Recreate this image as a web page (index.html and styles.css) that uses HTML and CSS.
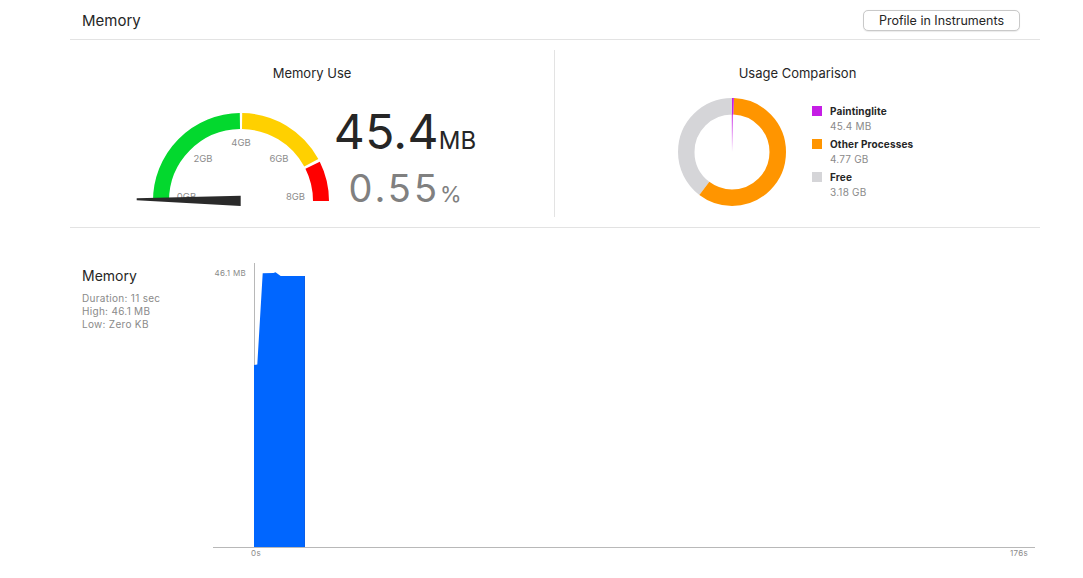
FILE: index.html
```html
<!DOCTYPE html>
<html lang="en">
<head>
<meta charset="utf-8">
<title>Memory</title>
<link rel="stylesheet" href="styles.css">
</head>
<body>
<div class="page">
  <header class="header">
    <div class="header-title">Memory</div>
    <button class="btn">Profile in Instruments</button>
  </header>

  <section class="top">
    <div class="panel panel-left">
      <div class="panel-title">Memory Use</div>
      <div class="gauge-row">
        <svg class="gauge" width="210" height="102" viewBox="0 0 210 102">
          <path d="M31 93 A80 80 0 0 1 109.9 13" fill="none" stroke="#03d82e" stroke-width="16"/>
          <path d="M112.1 13 A80 80 0 0 1 181.3 54.8" fill="none" stroke="#ffd000" stroke-width="16"/>
          <path d="M182.6 57.3 A80 80 0 0 1 191 93" fill="none" stroke="#ff0000" stroke-width="16"/>
          <g class="gauge-labels">
            <text x="56.5" y="91.5">0GB</text>
            <text x="73" y="54">2GB</text>
            <text x="111" y="38">4GB</text>
            <text x="149" y="54">6GB</text>
            <text x="165.5" y="91.5">8GB</text>
          </g>
          <polygon points="6.7,90.3 110.7,87.7 110.7,98 6.7,92.3" fill="#2a2a2a"/>
        </svg>
        <div class="readout">
          <div class="readout-main">45.4<span class="unit-main">MB</span></div>
          <div class="readout-pct">0.55<span class="unit-pct">%</span></div>
        </div>
      </div>
    </div>
    <div class="divider"></div>
    <div class="panel panel-right">
      <div class="panel-title">Usage Comparison</div>
      <div class="donut-row">
        <svg class="donut" width="112" height="112" viewBox="0 0 112 112">
          <defs>
            <linearGradient id="pl" x1="0" y1="0" x2="0" y2="1">
              <stop offset="0" stop-color="#c51de5" stop-opacity="1"/>
              <stop offset="1" stop-color="#c51de5" stop-opacity="0"/>
            </linearGradient>
          </defs>
          <g transform="rotate(-90 56 56)">
            <circle cx="56" cy="56" r="45.75" fill="none" stroke="#d5d5d8" stroke-width="16.5" stroke-dasharray="114.3 300" stroke-dashoffset="-173.16"/>
            <circle cx="56" cy="56" r="45.75" fill="none" stroke="#ff9500" stroke-width="16.5" stroke-dasharray="171.5 300" stroke-dashoffset="-1.66"/>
            <circle cx="56" cy="56" r="45.75" fill="none" stroke="#c51de5" stroke-width="16.5" stroke-dasharray="1.66 300"/>
          </g>
          <rect x="55.8" y="18" width="1" height="38" fill="url(#pl)"/>
        </svg>
        <div class="legend">
          <div class="legend-item">
            <span class="swatch swatch-purple"></span>
            <div class="legend-text">
              <div class="legend-label">Paintinglite</div>
              <div class="legend-value">45.4 MB</div>
            </div>
          </div>
          <div class="legend-item">
            <span class="swatch swatch-orange"></span>
            <div class="legend-text">
              <div class="legend-label">Other Processes</div>
              <div class="legend-value">4.77 GB</div>
            </div>
          </div>
          <div class="legend-item">
            <span class="swatch swatch-gray"></span>
            <div class="legend-text">
              <div class="legend-label">Free</div>
              <div class="legend-value">3.18 GB</div>
            </div>
          </div>
        </div>
      </div>
    </div>
  </section>

  <section class="bottom">
    <div class="side">
      <div class="side-title">Memory</div>
      <div class="side-details">
        <div>Duration: 11 sec</div>
        <div>High: 46.1 MB</div>
        <div>Low: Zero KB</div>
      </div>
    </div>
    <svg class="chart" width="822" height="300" viewBox="0 0 822 300">
      <text class="chart-label" x="33" y="18" text-anchor="end">46.1 MB</text>
      <line x1="41.5" y1="5" x2="41.5" y2="289" stroke="#b8b8b8" stroke-width="1"/>
      <polygon points="41,107 44.3,106.5 49.7,15.3 60.5,15 62.5,14.2 67.7,18 92,18 92,289 41,289" fill="#0066ff"/>
      <line x1="91.5" y1="18" x2="91.5" y2="289" stroke="#0a5ee8" stroke-width="1"/>
      <line x1="0" y1="289.5" x2="822" y2="289.5" stroke="#b8b8b8" stroke-width="1"/>
      <text class="chart-label" x="43" y="298" text-anchor="middle">0s</text>
      <text class="chart-label" x="815" y="298" text-anchor="end">176s</text>
    </svg>
  </section>
</div>
</body>
</html>
```

FILE: styles.css
```css
* { box-sizing: border-box; }

html, body {
  margin: 0;
  padding: 0;
  background: #ffffff;
}

body {
  font-family: "Inter", "Liberation Sans", sans-serif;
  color: #262626;
}

.page {
  margin-left: 70px;
  width: 970px;
}

.header {
  height: 40px;
  display: flex;
  align-items: center;
  justify-content: space-between;
  padding: 0 20px 0 12px;
  border-bottom: 1px solid #e3e3e3;
}

.header-title {
  font-size: 15px;
  line-height: 18px;
  padding-top: 2px;
  color: #262626;
}

.btn {
  width: 157px;
  height: 21px;
  padding: 0;
  margin-top: 2px;
  font-family: inherit;
  font-size: 12.5px;
  color: #262626;
  background: #ffffff;
  border: 1px solid #c9c9c9;
  border-radius: 5px;
  box-shadow: 0 0.5px 1px rgba(0,0,0,0.08);
}

.top {
  display: flex;
  height: 188px;
  border-bottom: 1px solid #e3e3e3;
}

.panel {
  padding-top: 25px;
  display: flex;
  flex-direction: column;
}

.panel-left { width: 484px; }
.panel-right { width: 485px; }

.divider {
  width: 1px;
  background: #e3e3e3;
  margin: 10px 0 10px;
}

.panel-title {
  text-align: center;
  font-size: 13px;
  line-height: 16px;
  color: #262626;
}

.gauge-row {
  display: flex;
  padding-left: 60px;
  margin-top: 27px;
}

.gauge { display: block; }

.gauge-labels text {
  font-family: "Inter", "Liberation Sans", sans-serif;
  font-size: 9.5px;
  fill: #8c8c8c;
  text-anchor: middle;
}

.readout {
  width: 130px;
  display: flex;
  flex-direction: column;
  align-items: center;
}

.readout-main {
  font-size: 48px;
  line-height: 48px;
  color: #262626;
  letter-spacing: 0.3px;
  white-space: nowrap;
}

.unit-main {
  font-size: 24px;
  letter-spacing: 0;
}

.readout-pct {
  margin-top: 3px;
  font-size: 38px;
  line-height: 40px;
  color: #808080;
  letter-spacing: 3px;
  white-space: nowrap;
}

.unit-pct {
  font-size: 22px;
  letter-spacing: 0;
}

.donut-row {
  display: flex;
  padding-left: 121px;
  margin-top: 15px;
}

.donut { display: block; }

.legend {
  margin-left: 24px;
  margin-top: 8px;
  display: flex;
  flex-direction: column;
  gap: 3px;
}

.legend-item {
  display: flex;
  align-items: flex-start;
  gap: 8px;
}

.swatch {
  width: 10px;
  height: 10px;
  margin-top: 2px;
  flex: none;
}

.swatch-purple { background: #c51de5; }
.swatch-orange { background: #ff9500; }
.swatch-gray { background: #d5d5d8; }

.legend-label {
  font-size: 10px;
  line-height: 15px;
  font-weight: 700;
  color: #262626;
  letter-spacing: 0.15px;
}

.legend-value {
  font-size: 10px;
  line-height: 15px;
  color: #8a8a8a;
  letter-spacing: 0.2px;
}

.bottom {
  display: flex;
}

.side {
  width: 143px;
  padding-left: 12px;
  padding-top: 39px;
}

.side-title {
  font-size: 14px;
  line-height: 17px;
  color: #262626;
}

.side-details {
  margin-top: 8px;
  font-size: 10px;
  line-height: 13px;
  color: #8a8a8a;
  letter-spacing: 0.3px;
}

.chart {
  display: block;
  margin-top: 30px;
}

.chart-label {
  font-family: "Inter", "Liberation Sans", sans-serif;
  font-size: 8px;
  letter-spacing: 0.3px;
  fill: #8a8a8a;
}
```
